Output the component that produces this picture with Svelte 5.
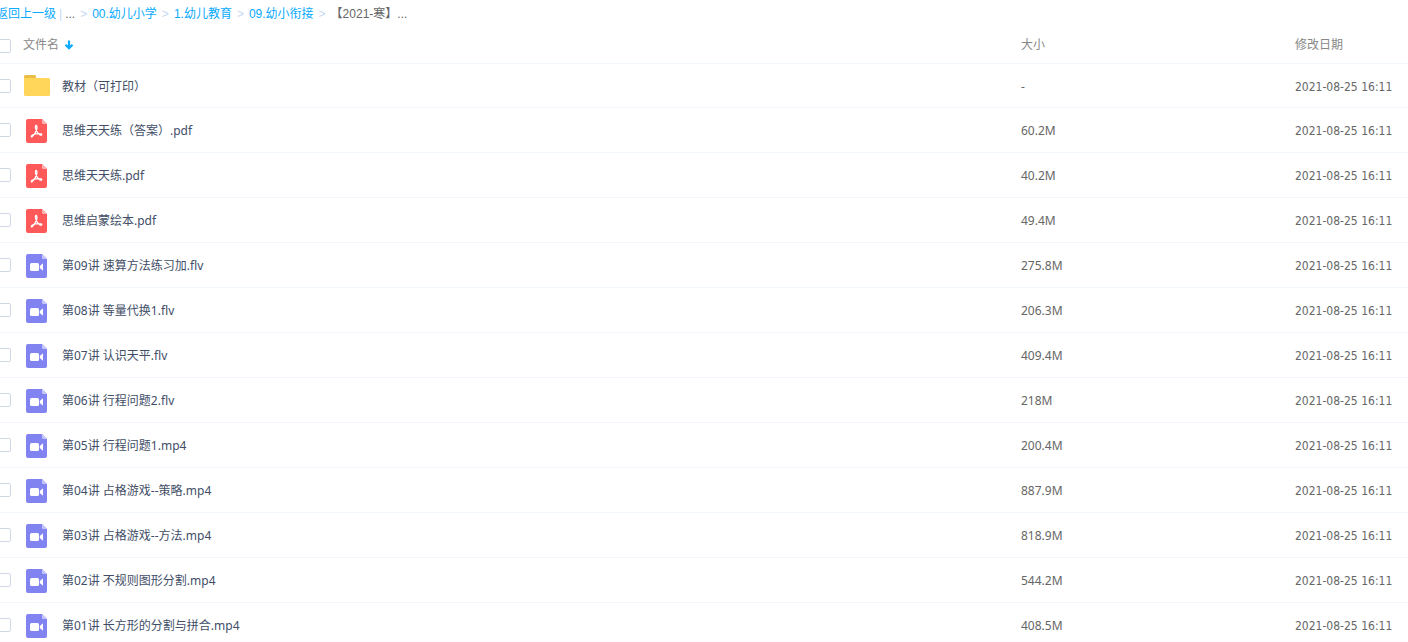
<script lang="ts">
  type FileKind = 'folder' | 'pdf' | 'video';

  interface FileItem {
    name: string;
    kind: FileKind;
    size: string;
    date: string;
  }

  const crumbs = ['00.幼儿小学', '1.幼儿教育', '09.幼小衔接'];
  const date = '2021-08-25 16:11';

  const files: FileItem[] = [
    { name: '教材（可打印）', kind: 'folder', size: '-', date },
    { name: '思维天天练（答案）.pdf', kind: 'pdf', size: '60.2M', date },
    { name: '思维天天练.pdf', kind: 'pdf', size: '40.2M', date },
    { name: '思维启蒙绘本.pdf', kind: 'pdf', size: '49.4M', date },
    { name: '第09讲 速算方法练习加.flv', kind: 'video', size: '275.8M', date },
    { name: '第08讲 等量代换1.flv', kind: 'video', size: '206.3M', date },
    { name: '第07讲 认识天平.flv', kind: 'video', size: '409.4M', date },
    { name: '第06讲 行程问题2.flv', kind: 'video', size: '218M', date },
    { name: '第05讲 行程问题1.mp4', kind: 'video', size: '200.4M', date },
    { name: '第04讲 占格游戏--策略.mp4', kind: 'video', size: '887.9M', date },
    { name: '第03讲 占格游戏--方法.mp4', kind: 'video', size: '818.9M', date },
    { name: '第02讲 不规则图形分割.mp4', kind: 'video', size: '544.2M', date },
    { name: '第01讲 长方形的分割与拼合.mp4', kind: 'video', size: '408.5M', date }
  ];

  let selected = $state(files.map(() => false));
  let allSelected = $derived(selected.every(Boolean));

  function toggleAll() {
    const next = !allSelected;
    selected = files.map(() => next);
  }
</script>

<div class="viewport">
  <main class="file-list">
    <nav class="crumbs" aria-label="路径">
      <span class="back">
        <a href="#back">返回上一级</a>
        <span class="divider">|</span>
        <span>...</span>
      </span>
      {#each crumbs as crumb}
        <span class="sep">&gt;</span>
        <a href="#{crumb}">{crumb}</a>
      {/each}
      <span class="sep">&gt;</span>
      <span class="current">【2021-寒】...</span>
    </nav>

    <table>
      <colgroup>
        <col class="col-check" />
        <col />
        <col class="col-size" />
        <col class="col-date" />
      </colgroup>
      <thead>
        <tr>
          <th class="check">
            <input type="checkbox" aria-label="全选" checked={allSelected} onchange={toggleAll} />
          </th>
          <th>
            <button class="sort" type="button">
              文件名
              <svg width="10" height="10" viewBox="0 0 10 10" aria-hidden="true">
                <path d="M5 0.500V8.500M1.500 4.800L5 8.300L8.500 4.800" fill="none" stroke="#09aaff" stroke-width="2.2" />
              </svg>
            </button>
          </th>
          <th>大小</th>
          <th>修改日期</th>
        </tr>
      </thead>
      <tbody>
        {#each files as file, i (file.name)}
          <tr>
            <td class="check">
              <input type="checkbox" aria-label={file.name} bind:checked={selected[i]} />
            </td>
            <td>
              <a class="name" href="#{file.name}">
                {#if file.kind === 'folder'}
                  <svg width="26" height="26" viewBox="0 0 26 26" aria-hidden="true">
                    <path d="M0 3V2.500Q0 1 1.500 1H10.500Q12 1 12 2.500V7H0Z" fill="#e9bd46" />
                    <path d="M0 4H24.500Q26 4 26 5.500V20.500Q26 22 24.500 22H1.500Q0 22 0 20.500Z" fill="#ffd659" />
                  </svg>
                {:else}
                  <svg width="26" height="26" viewBox="0 0 26 26" aria-hidden="true">
                    <path
                      d="M4 1H18L23 6V23Q23 25 21 25H4Q2 25 2 23V3Q2 1 4 1Z"
                      fill={file.kind === 'pdf' ? '#ff5959' : '#8183f1'}
                    />
                    <path d="M18 1L23 6H19.500Q18 6 18 4.500Z" fill={file.kind === 'pdf' ? '#ffb4b4' : '#c5c6f9'} />
                    {#if file.kind === 'pdf'}
                      <path
                        d="M11.800 7.500Q13.500 7.500 12.800 11Q11.500 16 7.800 19Q6.500 18.500 8.500 17Q13 15 17.500 16Q18.500 17.500 16 17Q12.500 14.500 11.500 10Q11.200 8 11.800 7.500Z"
                        fill="none"
                        stroke="#fff"
                        stroke-width="1.3"
                        stroke-linejoin="round"
                      />
                    {:else}
                      <rect x="6" y="10" width="9" height="8" rx="1.500" fill="#fff" />
                      <path d="M15.800 13L19 10.300V17.700L15.800 15Z" fill="#fff" />
                    {/if}
                  </svg>
                {/if}
                <span>{file.name}</span>
              </a>
            </td>
            <td>{file.size}</td>
            <td class="date">{file.date}</td>
          </tr>
        {/each}
      </tbody>
    </table>
  </main>
</div>

<style>
  :global(body) {
    background: #fff;
  }

  .viewport {
    height: 100vh;
    overflow: hidden;
  }

  /* the list starts slightly outside the left edge of the window */
  .file-list {
    margin-left: -4px;
    font-family: 'Noto Sans', 'Noto Sans CJK SC', sans-serif;
    font-size: 12px;
    line-height: 18px;
    color: #666;
  }

  .crumbs {
    display: flex;
    gap: 5px;
    height: 28px;
    align-items: center;
    font-family: 'Liberation Sans', 'Noto Sans CJK SC', sans-serif;
    white-space: nowrap;
  }

  .back {
    display: flex;
    gap: 3px;
  }

  .crumbs a {
    color: #09aaff;
    text-decoration: none;
  }

  .crumbs .sep,
  .crumbs .divider {
    color: #c4d8f4;
  }

  table {
    width: 100%;
    table-layout: fixed;
    border-collapse: separate;
    border-spacing: 0;
  }

  .col-check {
    width: 28px;
  }

  .col-size {
    width: 274px;
  }

  .col-date {
    width: 113px;
  }

  th,
  td {
    box-sizing: border-box;
    height: 45px;
    padding: 2px 0 0;
    border-bottom: 1px solid #f2f6fd;
    text-align: left;
    vertical-align: middle;
    font-weight: 400;
    white-space: nowrap;
  }

  th {
    height: 36px;
    padding: 0 0 2px;
    color: #888;
  }

  .check {
    padding: 0;
  }

  tbody tr:first-child td {
    height: 44px;
  }

  input {
    display: block;
    appearance: none;
    box-sizing: border-box;
    width: 14px;
    height: 14px;
    margin: 0 0 0 1px;
    border: 1px solid #d1d8e5;
    border-radius: 2px;
    background: #fff;
  }

  input:checked {
    background: #09aaff;
    border-color: #09aaff;
  }

  .sort {
    display: flex;
    align-items: center;
    gap: 5px;
    padding: 0;
    margin-left: -1px;
    border: 0;
    background: none;
    color: inherit;
    font: inherit;
    cursor: pointer;
  }

  .name {
    display: flex;
    align-items: center;
    gap: 12px;
    color: #424e67;
    text-decoration: none;
  }

  .name svg {
    flex: none;
  }

  .name:hover {
    color: #09aaff;
  }

  .date {
    font-family: 'DejaVu Sans Condensed', 'DejaVu Sans', sans-serif;
  }
</style>
